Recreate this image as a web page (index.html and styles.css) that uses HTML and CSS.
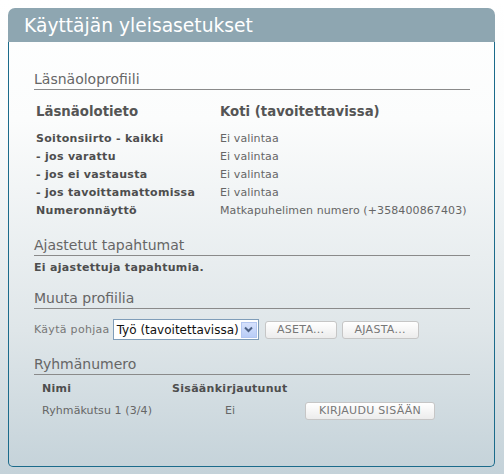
FILE: index.html
```html
<!DOCTYPE html>
<html lang="fi">
<head>
<meta charset="utf-8">
<title>Käyttäjän yleisasetukset</title>
<link rel="stylesheet" href="styles.css">
</head>
<body>
<div class="panel">
  <div class="panel-header">Käyttäjän yleisasetukset</div>
  <div class="panel-body">
    <h2 class="section-title first">Läsnäoloprofiili</h2>
    <div class="presence">
      <div class="presence-head">Läsnäolotieto</div>
      <div class="presence-head">Koti (tavoitettavissa)</div>
      <div class="p-label">Soitonsiirto - kaikki</div>
      <div class="p-value">Ei valintaa</div>
      <div class="p-label">- jos varattu</div>
      <div class="p-value">Ei valintaa</div>
      <div class="p-label">- jos ei vastausta</div>
      <div class="p-value">Ei valintaa</div>
      <div class="p-label">- jos tavoittamattomissa</div>
      <div class="p-value">Ei valintaa</div>
      <div class="p-label">Numeronnäyttö</div>
      <div class="p-value">Matkapuhelimen numero (+358400867403)</div>
    </div>

    <h2 class="section-title s2">Ajastetut tapahtumat</h2>
    <p class="no-events">Ei ajastettuja tapahtumia.</p>

    <h2 class="section-title s3">Muuta profiilia</h2>
    <div class="profile-row">
      <span class="profile-label">Käytä pohjaa</span>
      <div class="select">
        <span class="select-text">Työ (tavoitettavissa)</span>
        <span class="select-arrow"><svg width="9" height="7" viewBox="0 0 9 7"><path d="M1 1.5 L4.5 5 L8 1.5" fill="none" stroke="#4d6185" stroke-width="2"/></svg></span>
      </div>
      <button class="btn btn-aseta">ASETA...</button>
      <button class="btn btn-ajasta">AJASTA...</button>
    </div>

    <h2 class="section-title s4">Ryhmänumero</h2>
    <div class="group-table">
      <div class="g-head g-name">Nimi</div>
      <div class="g-head g-status">Sisäänkirjautunut</div>
      <div class="g-head"></div>
      <div class="g-cell g-name">Ryhmäkutsu 1 (3/4)</div>
      <div class="g-cell g-status g-center">Ei</div>
      <div class="g-cell"><button class="btn btn-login">KIRJAUDU SISÄÄN</button></div>
    </div>
  </div>
</div>
</body>
</html>
```

FILE: styles.css
```css
html {
  height: 100%;
  background: linear-gradient(to bottom, #ffffff 0px, #fbfcfc 120px, #dfe6e9 330px, #c4d2d9 474px);
}
body {
  margin: 8px;
  font-family: "DejaVu Sans", Verdana, sans-serif;
  color: #555;
}
.panel {
  width: 487px;
}
.panel-header {
  height: 34px;
  background: #8ea6b1;
  border-radius: 7px 7px 0 0;
  color: #fff;
  font-size: 18.7px;
  line-height: 35px;
  padding-left: 16px;
}
.panel-body {
  height: 394px;
  padding: 30px 24px 0 25px;
  border: 1px solid #1b6b8b;
  border-top: none;
  border-radius: 0 0 5px 5px;
}
.section-title {
  margin: 0;
  font-size: 14px;
  font-weight: normal;
  line-height: 15px;
  padding-bottom: 2px;
  border-bottom: 1px solid #8a8a8a;
  color: #666;
}
.section-title.s2 { margin-top: 18px; }
.section-title.s3 { margin-top: 14px; }
.section-title.s4 { margin-top: 17px; }

.presence {
  display: grid;
  grid-template-columns: 184px auto;
  padding-left: 2px;
  margin-top: 12px;
}
.presence-head {
  font-size: 13.3px;
  font-weight: bold;
  line-height: 20px;
  color: #555;
  margin-bottom: 8px;
}
.p-label {
  font-size: 11px;
  font-weight: bold;
  letter-spacing: 0.3px;
  line-height: 18px;
  color: #4e4e4e;
}
.p-value {
  font-size: 11px;
  letter-spacing: 0.1px;
  line-height: 18px;
  color: #666;
}
.no-events {
  margin: 3px 0 0;
  font-size: 11px;
  font-weight: bold;
  letter-spacing: 0.3px;
  line-height: 18px;
  color: #4e4e4e;
}
.profile-row {
  display: flex;
  align-items: center;
  margin-top: 10px;
  height: 21px;
}
.profile-label {
  font-size: 11px;
  letter-spacing: 0.3px;
  color: #777;
  margin-right: 3px;
}
.select {
  box-sizing: border-box;
  width: 146px;
  height: 21px;
  border: 1px solid #7f9db9;
  background: #fff;
  display: flex;
  align-items: center;
  justify-content: space-between;
  padding: 0 1px 0 3px;
  margin-right: 6px;
}
.select-text {
  font-size: 12px;
  color: #111;
  white-space: nowrap;
}
.select-arrow {
  width: 16px;
  height: 16px;
  box-sizing: border-box;
  background: linear-gradient(to bottom, #d6e1fc, #b9cdf7);
  border: 1px solid #b3c6f0;
  display: flex;
  align-items: center;
  justify-content: center;
}
.btn {
  box-sizing: border-box;
  height: 18px;
  font-family: "DejaVu Sans", Verdana, sans-serif;
  font-size: 11px;
  letter-spacing: 0.3px;
  color: #777;
  background: linear-gradient(to bottom, #ffffff, #ececec);
  border: 1px solid #c6c6c6;
  border-radius: 3px;
  padding: 0;
  line-height: 16px;
}
.btn-aseta { width: 72px; margin-right: 5px; }
.btn-ajasta { width: 77px; }
.btn-login { width: 130px; }

.group-table {
  display: grid;
  grid-template-columns: 130px 116px auto;
  padding-left: 8px;
  margin-top: 5px;
}
.g-head {
  font-size: 11px;
  font-weight: bold;
  letter-spacing: 0.3px;
  line-height: 18px;
  color: #4e4e4e;
}
.g-cell {
  font-size: 11px;
  letter-spacing: 0.1px;
  line-height: 22px;
  color: #666;
  margin-top: 2px;
  display: flex;
  align-items: center;
}
.g-center { justify-content: center; }
.g-cell .btn-login { margin-left: 17px; }
```
